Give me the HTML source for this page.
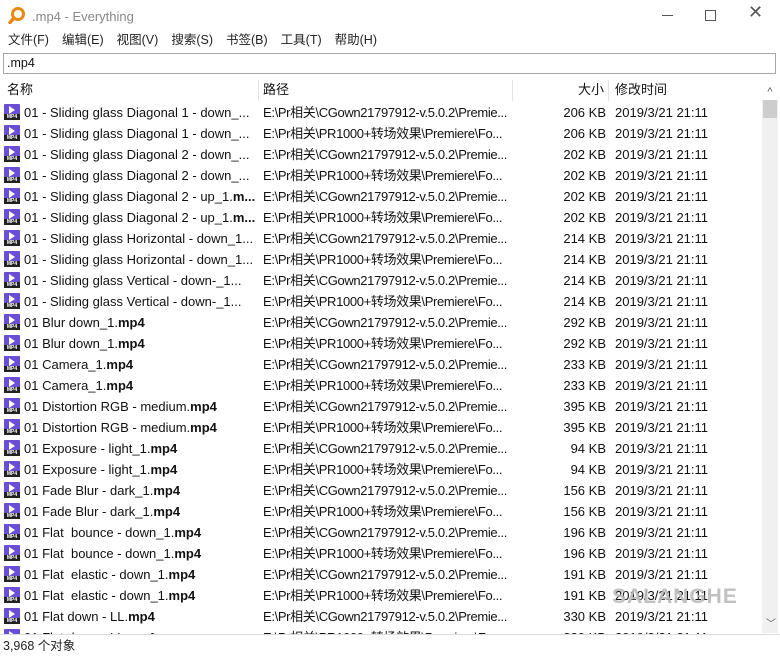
<!DOCTYPE html>
<html><head><meta charset="utf-8"><style>
*{margin:0;padding:0;box-sizing:border-box}
body{width:780px;height:657px;background:#fff;font-family:"Liberation Sans","Noto Sans CJK SC",sans-serif;font-size:13px;line-height:17px;color:#111;position:relative;overflow:hidden}
.t{position:absolute;left:32px;top:8px;font-size:13px;color:#888}
.menu{position:absolute;top:32px;left:8px;font-size:12.5px;color:#222}
.menu span{margin-right:13px}
.search{position:absolute;left:3px;top:53px;width:773px;height:21px;border:1px solid #a8a8a8;padding:1px 3px;font-size:12.5px}
.hdr{position:absolute;top:80px;left:0;width:762px;height:21px;font-size:13px}
.hdr div{position:absolute;top:1px}
.sep{position:absolute;top:0;width:1px;height:21px;background:#e3e3e3}
.row{position:absolute;left:0;width:762px;height:21px;white-space:nowrap}
.row .n{position:absolute;left:24px;top:2px;width:232px;overflow:hidden}
.row .p{position:absolute;left:263px;top:2px;letter-spacing:-0.35px}
.row .s{position:absolute;right:156px;top:2px}
.row .d{position:absolute;left:615px;top:2px}
.ic{position:absolute;left:4px;top:2px;width:16px;height:16px;background:#6a4fd6;border-radius:1px}
.ic:before{content:"";position:absolute;left:5px;top:2px;border-left:6px solid #fff;border-top:4px solid transparent;border-bottom:4px solid transparent}
.ic:after{content:"MP4";position:absolute;left:0;bottom:0;width:16px;height:6px;background:#222;color:#fff;font-size:5px;line-height:6px;text-align:center;font-weight:bold}
.sb{position:absolute;left:762px;top:100px;width:16px;height:533px;background:#f0f0f0}
.thumb{position:absolute;left:1px;top:0px;width:14px;height:18px;background:#cdcdcd}
.status{position:absolute;left:0;top:634px;width:780px;height:23px;border-top:1px solid #ddd;background:#fff;padding:3px 3px;font-size:12.5px;color:#222}
</style></head><body>
<svg style="position:absolute;left:8px;top:7px" width="17" height="17" viewBox="0 0 17 17"><circle cx="10" cy="7" r="5.5" fill="none" stroke="#e88a10" stroke-width="3"/><line x1="6" y1="11" x2="2" y2="15.5" stroke="#e88a10" stroke-width="3.5" stroke-linecap="round"/></svg>
<div class="t">.mp4 - Everything</div>
<div style="position:absolute;left:662px;top:15px;width:11px;height:1px;background:#555"></div>
<div style="position:absolute;left:705px;top:10px;width:11px;height:11px;border:1px solid #555"></div>
<div style="position:absolute;left:748px;top:4px;font-size:18px;color:#555">✕</div>
<div class="menu"><span>文件(F)</span><span>编辑(E)</span><span>视图(V)</span><span>搜索(S)</span><span>书签(B)</span><span>工具(T)</span><span>帮助(H)</span></div>
<div class="search">.mp4</div>
<div class="hdr"><div style="left:7px">名称</div><div style="left:263px">路径</div><div style="left:578px">大小</div><div style="left:615px">修改时间</div>
<span class="sep" style="left:258px"></span><span class="sep" style="left:512px"></span><span class="sep" style="left:608px"></span></div>
<div id="rows"></div>
<div class="sb"><div class="thumb"></div><div style="position:absolute;top:516px;left:4px;font-size:10px;color:#555">﹀</div></div>
<div style="position:absolute;left:762px;top:80px;width:16px;height:20px;font-size:11px;color:#555;text-align:center;padding-top:4px">^</div>
<div class="status">3,968 个对象</div>
<div style="position:absolute;left:612px;top:585px;font-size:21px;font-weight:bold;color:#bbb;letter-spacing:1px;line-height:24px;opacity:.9">SALANGHE</div>
<script>
var A="E:\\Pr相关\\CGown21797912-v.5.0.2\\Premie...",B="E:\\Pr相关\\PR1000+转场效果\\Premiere\\Fo...";
var r=[["01 - Sliding glass Diagonal 1 - down_...",A,206],["01 - Sliding glass Diagonal 1 - down_...",B,206],["01 - Sliding glass Diagonal 2 - down_...",A,202],["01 - Sliding glass Diagonal 2 - down_...",B,202],["01 - Sliding glass Diagonal 2 - up_1.<b>m...</b>",A,202],["01 - Sliding glass Diagonal 2 - up_1.<b>m...</b>",B,202],["01 - Sliding glass Horizontal - down_1...",A,214],["01 - Sliding glass Horizontal - down_1...",B,214],["01 - Sliding glass Vertical - down-_1...",A,214],["01 - Sliding glass Vertical - down-_1...",B,214],["01 Blur down_1.<b>mp4</b>",A,292],["01 Blur down_1.<b>mp4</b>",B,292],["01 Camera_1.<b>mp4</b>",A,233],["01 Camera_1.<b>mp4</b>",B,233],["01 Distortion RGB - medium.<b>mp4</b>",A,395],["01 Distortion RGB - medium.<b>mp4</b>",B,395],["01 Exposure - light_1.<b>mp4</b>",A,94],["01 Exposure - light_1.<b>mp4</b>",B,94],["01 Fade Blur - dark_1.<b>mp4</b>",A,156],["01 Fade Blur - dark_1.<b>mp4</b>",B,156],["01 Flat &nbsp;bounce - down_1.<b>mp4</b>",A,196],["01 Flat &nbsp;bounce - down_1.<b>mp4</b>",B,196],["01 Flat &nbsp;elastic - down_1.<b>mp4</b>",A,191],["01 Flat &nbsp;elastic - down_1.<b>mp4</b>",B,191],["01 Flat down - LL.<b>mp4</b>",A,330],["01 Flat down - LL.<b>mp4</b>",B,330]];
var h="";r.forEach(function(x,i){h+='<div class="row" style="top:'+(102+21*i)+'px"><span class="ic"></span><span class="n">'+x[0]+'</span><span class="p">'+x[1]+'</span><span class="s">'+x[2]+' KB</span><span class="d">2019/3/21 21:11</span></div>'});
document.getElementById("rows").innerHTML=h;
</script>
</body></html>
